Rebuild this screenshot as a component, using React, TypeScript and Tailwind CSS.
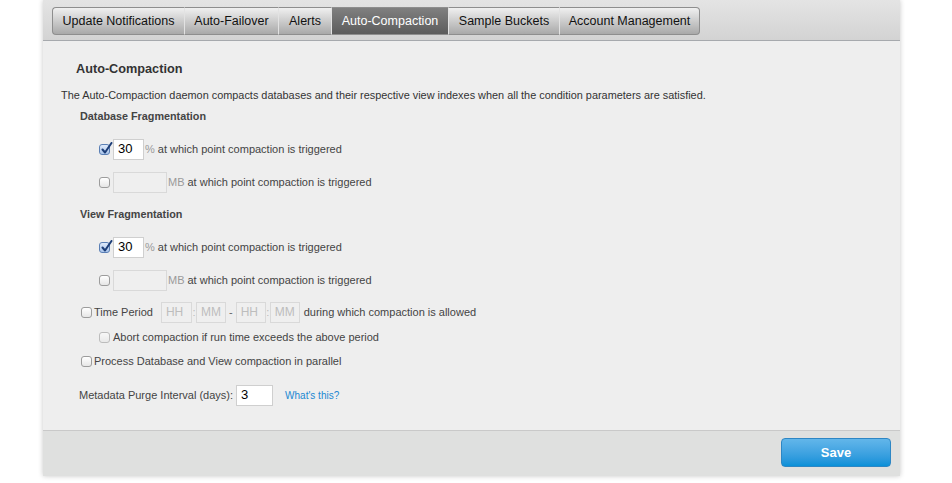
import React from "react";

const tabs = [
  { label: "Update Notifications", w: 132 },
  { label: "Auto-Failover", w: 94 },
  { label: "Alerts", w: 53 },
  { label: "Auto-Compaction", w: 117, active: true },
  { label: "Sample Buckets", w: 111 },
  { label: "Account Management", w: 141 },
];

function Check({ checked }: { checked?: boolean }) {
  return (
    <span
      className={
        "relative inline-block w-[11px] h-[11px] rounded-[3px] border shrink-0 " +
        (checked
          ? "border-[#5a7fb5] bg-gradient-to-b from-[#dfeafa] to-[#a9c4ea]"
          : "border-[#9c9c9c] bg-gradient-to-b from-white to-[#e6e6e6]")
      }
    >
      {checked && (
        <svg
          className="absolute -top-[3px] left-[1px]"
          width="12"
          height="13"
          viewBox="0 0 12 13"
        >
          <path
            d="M1.5 7.5 L4 10.5 L10.5 1"
            fill="none"
            stroke="#1d3e78"
            strokeWidth="2"
            strokeLinecap="round"
            strokeLinejoin="round"
          />
        </svg>
      )}
    </span>
  );
}

function Box({
  w,
  value,
  placeholder,
  disabled,
}: {
  w: number;
  value?: string;
  placeholder?: string;
  disabled?: boolean;
}) {
  return (
    <span
      style={{ width: w }}
      className={
        "inline-flex items-center h-[21px] border px-[4px] " +
        (disabled
          ? "bg-[#efefef] border-[#d9d9d9] text-[#bdbdbd] text-[12px]"
          : "bg-white border-[#cfcfcf] text-black text-[13px]")
      }
    >
      {value ?? placeholder}
    </span>
  );
}

function FragRow({ pct }: { pct: boolean }) {
  return (
    <div className="flex items-center h-[22px] pl-[56px] text-[11px] text-[#444]">
      <Check checked={pct} />
      <span className="ml-[3px] inline-flex">
        {pct ? <Box w={31} value="30" /> : <Box w={54} disabled />}
      </span>
      <span className="ml-[1px] text-[#9a9a9a]">{pct ? "%" : "MB"}</span>
      <span className="ml-[3px]">at which point compaction is triggered</span>
    </div>
  );
}

export default function App() {
  return (
    <div
      className="w-[952px] h-[483px] bg-white overflow-hidden"
      style={{ fontFamily: '"Liberation Sans", Arial, sans-serif' }}
    >
      <div className="ml-[43px] w-[857px] h-[476px] flex flex-col bg-[#eeeeee] shadow-[0_0_5px_rgba(0,0,0,0.22)]">
        {/* header */}
        <div className="h-[41px] shrink-0 bg-gradient-to-b from-[#e4e4e4] to-[#d3d3d3] border-b border-[#a6a9ad] pt-[7px] pl-[9px]">
          <div className="flex h-[28px]">
            {tabs.map((t, i) => (
              <div
                key={t.label}
                style={{ width: t.w }}
                className={
                  "flex items-center justify-center text-[12.5px] border-y border-[#8e8e8e] " +
                  (i === 0 ? "border-l rounded-l-[4px] " : "border-l border-l-[#e2e2e2] ") +
                  (i === tabs.length - 1 ? "border-r rounded-r-[4px] " : "") +
                  (t.active
                    ? "bg-gradient-to-b from-[#808080] to-[#5c5c5c] text-white border-l-[#8e8e8e]"
                    : "bg-gradient-to-b from-[#f0f0f0] to-[#a9a9a9] text-[#111]")
                }
              >
                {t.label}
              </div>
            ))}
          </div>
        </div>

        {/* body */}
        <div className="flex-1 flex flex-col pt-[20px]">
          <div className="h-[17px] leading-[17px] pl-[33px] text-[12.7px] font-bold text-[#333]">
            Auto-Compaction
          </div>
          <div className="mt-[10px] h-[14px] leading-[14px] pl-[18px] text-[10.9px] text-[#333]">
            The Auto-Compaction daemon compacts databases and their respective view indexes when all the condition parameters are satisfied.
          </div>
          <div className="mt-[7px] h-[14px] leading-[14px] pl-[37px] text-[10.8px] font-bold text-[#444]">
            Database Fragmentation
          </div>
          <div className="mt-[15px]">
            <FragRow pct />
          </div>
          <div className="mt-[11px]">
            <FragRow pct={false} />
          </div>
          <div className="mt-[14px] h-[14px] leading-[14px] pl-[37px] text-[10.8px] font-bold text-[#444]">
            View Fragmentation
          </div>
          <div className="mt-[15px]">
            <FragRow pct />
          </div>
          <div className="mt-[11px]">
            <FragRow pct={false} />
          </div>

          <div className="mt-[10px] flex items-center h-[22px] pl-[38px] text-[11px] text-[#444]">
            <Check />
            <span className="ml-[2px]">Time Period</span>
            <span className="ml-[8px] inline-flex">
              <Box w={31} placeholder="HH" disabled />
            </span>
            <span className="mx-[0.5px] text-[#bbb]">:</span>
            <Box w={30} placeholder="MM" disabled />
            <span className="mx-[3px] text-[#666]">-</span>
            <Box w={30} placeholder="HH" disabled />
            <span className="mx-[0.5px] text-[#bbb]">:</span>
            <Box w={30} placeholder="MM" disabled />
            <span className="ml-[4px]">during which compaction is allowed</span>
          </div>
          <div className="mt-[3px] flex items-center h-[22px] pl-[56px] text-[11px] text-[#444]">
            <span className="opacity-60 inline-flex">
              <Check />
            </span>
            <span className="ml-[3px]">Abort compaction if run time exceeds the above period</span>
          </div>
          <div className="mt-[2px] flex items-center h-[22px] pl-[38px] text-[11px] text-[#444]">
            <Check />
            <span className="ml-[2px]">Process Database and View compaction in parallel</span>
          </div>
          <div className="mt-[12px] flex items-center h-[22px] pl-[36px] text-[11px] text-[#444]">
            <span>Metadata Purge Interval (days):</span>
            <span className="ml-[3px] inline-flex">
              <Box w={37} value="3" />
            </span>
            <span className="ml-[12px] text-[10px] text-[#1a88d2]">What's this?</span>
          </div>
        </div>

        {/* footer */}
        <div className="h-[46px] shrink-0 bg-[#dfe0df] border-t border-[#c9c9c9] flex items-center justify-end pr-[9px]">
          <button className="w-[110px] h-[29px] rounded-[4px] border border-[#2d86c4] bg-gradient-to-b from-[#62b6ea] to-[#0690d8] text-white text-[13px] font-bold mb-[2px]">
            Save
          </button>
        </div>
      </div>
    </div>
  );
}
